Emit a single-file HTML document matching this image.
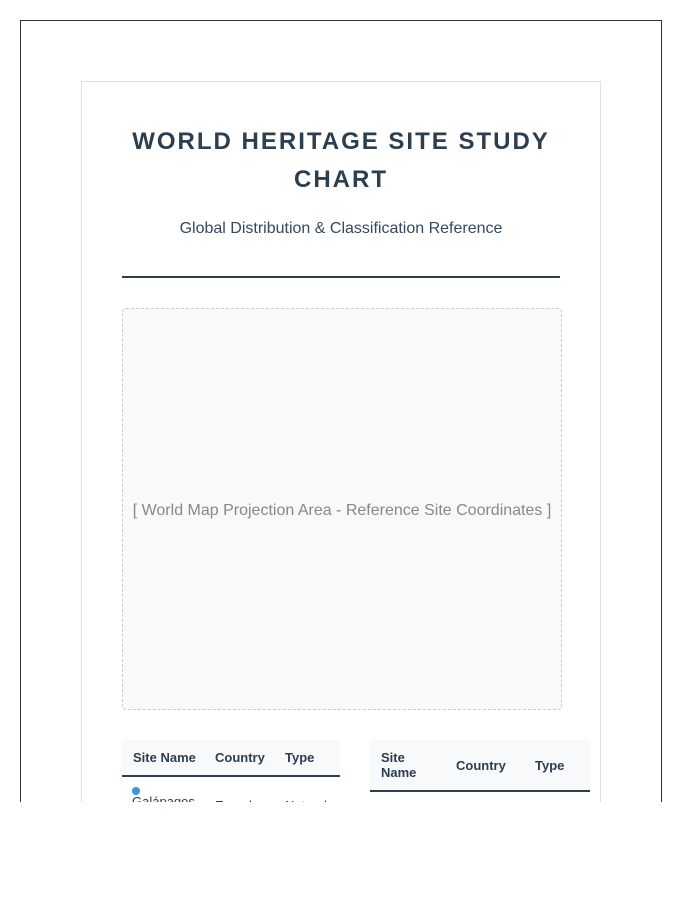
<!DOCTYPE html>
<html lang="en">
<head>
<meta charset="utf-8">
<title>World Heritage Site Study Chart</title>
<style>
html,body{margin:0;padding:0;background:#fff;width:700px;height:900px;overflow:hidden;font-family:"Liberation Sans",Arial,sans-serif;color:#2c3e50}
.clip{position:absolute;left:0;top:0;width:700px;height:802px;overflow:hidden}
.outer{position:absolute;left:20px;top:20px;width:640px;height:800px;border:1px solid #333}
.card{position:absolute;left:81px;top:81px;width:518px;height:800px;border:1px solid #e0e0e0;background:#fff}
h1{position:absolute;left:122px;top:123px;width:438px;margin:0;font-size:24px;line-height:38.4px;font-weight:700;letter-spacing:2px;text-align:center}
.sub{position:absolute;left:122px;top:220px;width:438px;text-align:center;font-size:16px;line-height:18px;color:#34495e}
.rule{position:absolute;left:122px;top:276px;width:438px;height:2px;background:#2c3e50}
.map{position:absolute;left:122px;top:308px;width:438px;height:400px;border:1px dashed #ccc;border-radius:4px;background:#f8f9fa;color:#888;font-size:16px;line-height:404px;text-align:center;white-space:nowrap}
.th{position:absolute;background:#f8f9fa;border-bottom:2px solid #2c3e50}
.h{position:absolute;font-size:13px;line-height:15px;font-weight:700;color:#2c3e50;white-space:nowrap}
.c{position:absolute;font-size:13px;line-height:15px;color:#2c3e50;white-space:nowrap}
.dot{position:absolute;left:132px;top:787px;width:8px;height:8px;border-radius:50%;background:#3498db}
</style>
</head>
<body>
<div class="clip">
  <div class="outer"></div>
  <div class="card"></div>
  <h1>WORLD HERITAGE SITE STUDY CHART</h1>
  <div class="sub">Global Distribution &amp; Classification Reference</div>
  <div class="rule"></div>
  <div class="map">[ World Map Projection Area - Reference Site Coordinates ]</div>

  <div class="th" style="left:122px;top:740px;width:218px;height:35px"></div>
  <div class="h" style="left:133px;top:750px">Site Name</div>
  <div class="h" style="left:215px;top:750px">Country</div>
  <div class="h" style="left:285px;top:750px">Type</div>
  <div class="dot"></div>
  <div class="c" style="left:132px;top:794px">Galápagos</div>
  <div class="c" style="left:215px;top:798px">Ecuador</div>
  <div class="c" style="left:285px;top:798px">Natural</div>

  <div class="th" style="left:370px;top:740px;width:220px;height:50px"></div>
  <div class="h" style="left:381px;top:750px">Site<br>Name</div>
  <div class="h" style="left:456px;top:758px">Country</div>
  <div class="h" style="left:535px;top:758px">Type</div>
</div>
</body>
</html>
